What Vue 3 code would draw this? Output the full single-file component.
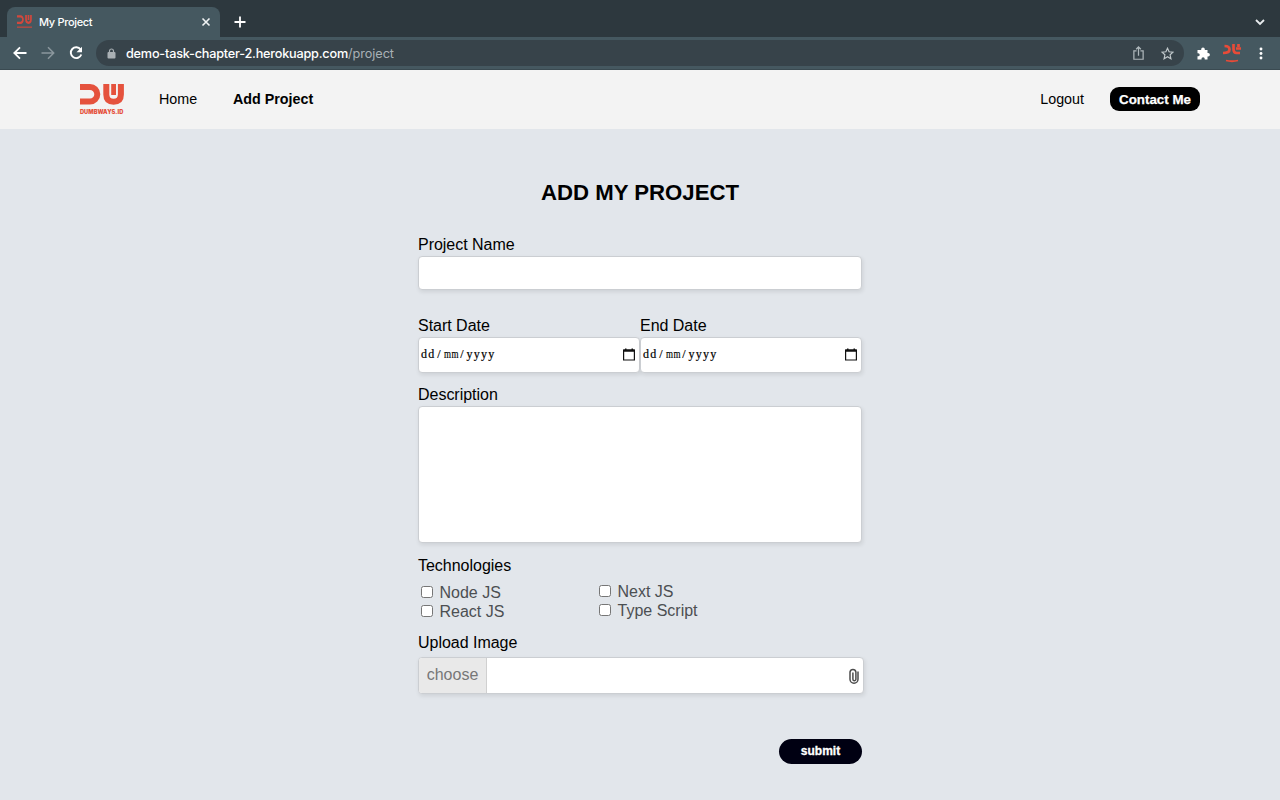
<script setup>
const dates = ['Start Date', 'End Date']
const techColumns = [['Node JS', 'React JS'], ['Next JS', 'Type Script']]
</script>

<template>
  <div class="window">
    <div class="tabs">
      <div class="tab">
        <svg class="favicon" viewBox="0 0 44 31" preserveAspectRatio="none"><path d="M0 3.200h10.500a7 7 0 0 1 0 14H0M26.500 0v10q0 7.200 7.200 7.200q7.200 0 7.200-7.200V0M33.700 0v11" fill="none" stroke="#d2483d" stroke-width="5"/><path d="M0 27h44" stroke="#a94a44" stroke-width="3.500"/></svg>
        <span class="tab-title">My Project</span>
        <svg class="close" viewBox="0 0 10 10"><path d="M1.500 1.500l7 7M8.500 1.500l-7 7" stroke="#f0f3f4" stroke-width="1.600" fill="none"/></svg>
      </div>
      <svg class="plus" viewBox="0 0 12 12"><path d="M6 .5v11M.5 6h11" stroke="#fff" stroke-width="1.800"/></svg>
      <svg class="chevron" viewBox="0 0 10 8"><path d="M1 2l4 4 4-4" stroke="#e8ecee" stroke-width="1.800" fill="none"/></svg>
    </div>
    <div class="toolbar">
      <svg class="nav-icon" viewBox="0 0 14 14"><path d="M13.500 7H1.500M7 1.300L1.300 7 7 12.700" stroke="#fff" stroke-width="1.800" fill="none"/></svg>
      <svg class="nav-icon forward" viewBox="0 0 14 14"><path d="M.5 7h12M7 1.300L12.700 7 7 12.700" stroke="#8b979d" stroke-width="1.500" fill="none"/></svg>
      <svg class="nav-icon reload" viewBox="0 0 14 14"><path d="M11.600 3.500A5.400 5.400 0 1 0 12.300 8.500" stroke="#fff" stroke-width="1.900" fill="none"/><path d="M13 .7v5.500H7.500z" fill="#fff"/></svg>
      <div class="address">
        <svg class="lock" viewBox="0 0 8 11"><rect y="4" width="8" height="6.500" rx="1" fill="#a9b0b4"/><path d="M2 4.500V3a2 2 0 0 1 4 0v1.500" stroke="#a9b0b4" stroke-width="1.200" fill="none"/></svg>
        <span class="url">demo-task-chapter-2.herokuapp.com<span class="path">/project</span></span>
        <svg class="share" viewBox="0 0 10 13"><path d="M3.200 4.500H.7v7.800h8.600V4.500H6.800M5 9V1M2.800 3L5 .9 7.200 3" fill="none" stroke="#aeb7bb" stroke-width="1.150"/></svg>
        <svg class="star" viewBox="0 0 13 13"><path d="M6.500 1.300l1.600 3.500 3.900.4-2.900 2.600.8 3.900-3.400-2-3.400 2 .8-3.900L1 5.200l3.900-.4z" fill="none" stroke="#c1c8cb" stroke-width="1.200"/></svg>
      </div>
      <svg class="puzzle" viewBox="0 0 13 13"><path d="M1.500 3h2.700V2.200a1.800 1.800 0 0 1 3.600 0V3h2.700v3h.7a1.700 1.700 0 0 1 0 3.400h-.7v3.100H7.700v-.7a1.600 1.600 0 0 0-3.200 0v.7h-4V9.300h.7a1.500 1.500 0 0 0 0-3H.5V3z" fill="#fff"/></svg>
      <svg class="avatar" viewBox="0 0 20 19"><path d="M2.500 2q5 0 5 3.500T1 9M11.500 0v5q0 4 3 4h3.500M16.500 0v3M14 4.500h5" fill="none" stroke="#e84b38" stroke-width="2.700"/><path d="M4 16.500q6 1.500 12 0" fill="none" stroke="#e84b38" stroke-width="1.800"/></svg>
      <svg class="dots" viewBox="0 0 4 13"><circle cx="2" cy="2" r="1.450"/><circle cx="2" cy="6.500" r="1.450"/><circle cx="2" cy="11" r="1.450"/></svg>
    </div>

    <header class="site-nav">
      <div class="logo">
        <svg viewBox="0 0 44 21"><path d="M0 3h10a7.300 7.300 0 0 1 0 14.600H0" fill="none" stroke="#e5523d" stroke-width="6"/><path d="M26.300 0v10.500q0 7.200 7.300 7.200t7.300-7.200V0" fill="none" stroke="#e5523d" stroke-width="6"/><path d="M33.600 0v11" stroke="#e5523d" stroke-width="4.800"/></svg>
        <span>DUMBWAYS.ID</span>
      </div>
      <a class="home">Home</a>
      <a class="active">Add Project</a>
      <a class="logout">Logout</a>
      <a class="contact">Contact Me</a>
    </header>

    <main>
      <h1>ADD MY PROJECT</h1>
      <form>
        <label class="first">Project Name</label>
        <div class="box name"></div>
        <div class="dates">
          <div v-for="d in dates" :key="d" class="date-col">
            <label>{{ d }}</label>
            <div class="box date">
              <span class="mask"><span>dd</span><span class="slash">/</span><span class="mm">mm</span><span class="slash">/</span><span>yyyy</span></span>
              <svg viewBox="0 0 12 13"><path d="M.6 2h10.800v10H.6z" fill="none" stroke="#111" stroke-width="1.200"/><path d="M.5 1.500h11v2.200H.5zM2 .5h1.500v2H2zM8.500 .5H10v2H8.500z" fill="#111"/></svg>
            </div>
          </div>
        </div>
        <label>Description</label>
        <div class="box description"></div>
        <label>Technologies</label>
        <div class="techs">
          <div v-for="(col, i) in techColumns" :key="i" class="tech-col">
            <div v-for="t in col" :key="t" class="tech"><i></i><span>{{ t }}</span></div>
          </div>
        </div>
        <label>Upload Image</label>
        <div class="box upload">
          <span class="choose">choose</span>
          <svg viewBox="0 0 10 16"><path d="M9 3.500v7.700a4 4 0 0 1-8 0V4a3 3 0 0 1 5.900 0v7.200a1.500 1.500 0 0 1-3 0V4.500" fill="none" stroke="#4c4c4c" stroke-width="1.500"/></svg>
        </div>
        <div class="actions"><button type="button">submit</button></div>
      </form>
    </main>
  </div>
</template>

<style>
html, body { margin: 0; overflow: hidden; }
</style>

<style scoped>
* { box-sizing: border-box; }
svg { display: block; flex: none; }
.window { width: 1280px; height: 800px; overflow: hidden; background: #e2e6eb; color: #000; font-family: "Liberation Sans", Arial, sans-serif; font-size: 16px; }
.tabs { height: 37px; background: #2d383e; display: flex; align-items: center; padding: 7px 15px 0 7px; }
.tab { width: 213px; height: 30px; background: #455860; border-radius: 8px 8px 0 0; display: flex; align-items: center; padding: 0 9px 0 10px; color: #fff; font: 500 11px Inter, sans-serif; }
.favicon { width: 15px; height: 14px; }
.tab-title { margin-left: 7px; flex: 1; letter-spacing: -.32px; white-space: nowrap; }
.close { width: 10px; height: 10px; }
.plus { width: 12px; height: 12px; margin-left: 14px; }
.chevron { width: 10px; height: 8px; margin-left: auto; }
.toolbar { height: 33px; background: #455860; border-bottom: 1px solid #3a4a51; display: flex; align-items: center; padding: 0 16px 0 13px; }
.nav-icon { width: 14px; height: 14px; }
.forward { margin-left: 14px; }
.reload { margin-left: 14px; }
.address { width: 1088px; height: 26px; border-radius: 13px; margin-left: 13px; background: #37434a; display: flex; align-items: center; padding: 0 10px 0 11px; }
.lock { width: 9px; height: 11px; }
.url { margin-left: 10px; color: #fff; font: 500 12.700px Inter, sans-serif; letter-spacing: -.22px; flex: 1; white-space: nowrap; }
.path { color: #a8b1b6; font-weight: 400; letter-spacing: -.05px; }
.share { width: 11px; height: 14px; }
.star { width: 13px; height: 13px; margin-left: 17px; }
.puzzle { width: 13px; height: 13px; margin-left: 13px; }
.avatar { width: 20px; height: 19px; margin-left: 12px; }
.dots { width: 4px; height: 13px; margin-left: auto; margin-right: 1px; fill: #fff; }

.site-nav { height: 59px; background: #f3f3f3; padding: 0 80px 2px; display: flex; align-items: center; font-size: 14.300px; }
.logo { width: 44px; height: 30px; color: #e5523d; }
.logo svg { width: 44px; height: 21px; }
.logo span { display: block; margin-top: 3px; font: 900 5.700px/7px Inter, sans-serif; white-space: nowrap; }
.home { margin-left: 35px; width: 38px; }
.active { margin-left: 36px; font-weight: 700; white-space: nowrap; }
.logout { margin-left: auto; }
.contact { width: 90px; height: 24px; margin-left: 26px; border-radius: 9px; background: #000; color: #fff; font: 700 13.330px/25px "Liberation Sans", Arial, sans-serif; text-align: center; -webkit-text-stroke: .25px #fff; white-space: nowrap; }

main { padding-top: 50px; }
h1 { margin: 0; height: 26px; line-height: 27px; font-size: 22.200px; text-align: center; }
form { width: 444px; margin: 31px auto 0; }
label { display: block; height: 20px; line-height: 20px; letter-spacing: -.02px; white-space: nowrap; }
.first { line-height: 18px; }
.box { background: #fff; border: 1px solid #cbced2; border-radius: 4px; box-shadow: 1px 2px 4px rgba(0, 0, 0, .09); }
.name { height: 34px; margin-bottom: 26px; }
.dates { display: flex; margin-bottom: 12px; }
.date-col { width: 222px; }
.date-col label { height: 21px; }
.date { height: 36px; display: flex; align-items: center; justify-content: space-between; padding: 0 4px 2px 2px; }
.mask { display: flex; font: 12px/15px "Liberation Serif", serif; letter-spacing: 1.250px; -webkit-text-stroke: .2px #000; }
.slash { width: 8px; text-align: center; }
.mm { display: block; width: 15px; letter-spacing: .5px; transform: scaleX(.75); transform-origin: 0 0; }
.date svg { width: 12px; height: 13px; }
.description { height: 137px; margin: 1px 0 13px; }
.techs { display: flex; margin-top: 7px; height: 50px; color: #4c4f52; }
.tech-col { width: 178px; padding-left: 3px; }
.tech-col + .tech-col { margin-top: -1px; }
.tech { height: 19px; display: flex; align-items: center; white-space: nowrap; line-height: 19px; }
.tech i { width: 12px; height: 12px; border: 1px solid #767676; border-radius: 2.500px; background: #fff; margin: 0 6.500px 1px 0; }
.upload { width: 446px; height: 37px; margin-top: 4px; display: flex; align-items: center; justify-content: space-between; padding-right: 4px; }
.choose { width: 68px; height: 35px; line-height: 34px; text-align: center; color: #777; background: #e9e9e9; border-right: 1px solid #d0d0d0; border-radius: 3px 0 0 3px; }
.upload svg { width: 10px; height: 16px; }
.actions { display: flex; justify-content: flex-end; margin-top: 45px; }
button { width: 83px; height: 25px; padding: 0; border: 0; border-radius: 13px; background: #000012; color: #fff; font: 700 12px/25px "Liberation Sans", Arial, sans-serif; -webkit-text-stroke: .3px #fff; }
</style>
